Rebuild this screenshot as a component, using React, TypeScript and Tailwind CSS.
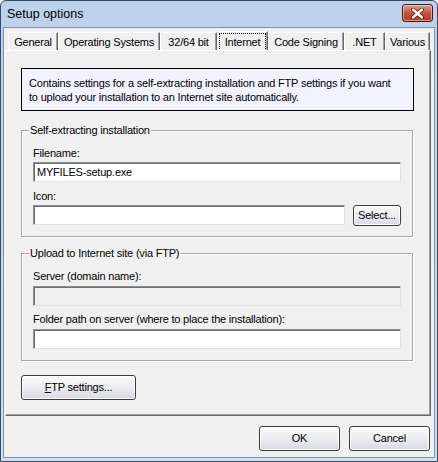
import React from 'react';

const tabs = [
  { label: 'General', w: 'w-[50px]' },
  { label: 'Operating Systems', w: 'w-[102px]' },
  { label: '32/64 bit', w: 'w-[57px]' },
  { label: 'Internet', w: 'w-[51px]', active: true },
  { label: 'Code Signing', w: 'w-[76px]' },
  { label: '.NET', w: 'w-[41px]' },
  { label: 'Various', w: 'w-[45px]' },
];

function TextBox({ value = '', disabled = false, className = '' }: { value?: string; disabled?: boolean; className?: string }) {
  return (
    <div
      className={`h-[20px] border border-t-[#8e8e8e] border-l-[#8e8e8e] border-r-[#e3e3e3] border-b-[#e3e3e3] shadow-[inset_1px_1px_0_#6d6d6d] pl-[3px] flex items-center ${disabled ? 'bg-[#f0f0f0]' : 'bg-white'} ${className}`}
    >
      {value}
    </div>
  );
}

function Button({ children, className = '' }: { children: React.ReactNode; className?: string }) {
  return (
    <div
      className={`flex items-center justify-center rounded-[3px] border border-[#3c3c3c] bg-gradient-to-b from-[#fbfbfd] via-[#ececf2] to-[#d9d9e6] shadow-[inset_0_0_0_1px_#fff] ${className}`}
    >
      {children}
    </div>
  );
}

function Group({ title, children, className = '' }: { title: string; children: React.ReactNode; className?: string }) {
  return (
    <fieldset
      className={`border border-[#a6a6a6] shadow-[inset_1px_1px_0_#fff,1px_1px_0_#fff] pl-[11px] pr-[11px] ${className}`}
    >
      <legend className="-ml-[4px] px-[1px] leading-[14px]">{title}</legend>
      {children}
    </fieldset>
  );
}

export default function App() {
  return (
    <div
      className="w-[438px] h-[462px] flex flex-col rounded-t-[6px] border border-[#3b4b63] bg-gradient-to-b from-[#bcd1ec] to-[#cfdff2] text-[11px] tracking-[-0.2px] text-black"
      style={{ fontFamily: '"Liberation Sans", Arial, sans-serif' }}
    >
      {/* title bar */}
      <div className="h-[26px] flex items-center pl-[6px] pr-[4px] shrink-0">
        <span className="text-[12.5px] tracking-normal flex-1 pt-[1px]">Setup options</span>
        <div className="w-[31px] h-[18px] -mt-[2px] rounded-[3px] border border-[#4a1a14] bg-gradient-to-b from-[#e2a08f] via-[#c5503b] to-[#b93a22] shadow-[inset_0_0_0_1px_rgba(255,255,255,0.45)] flex items-center justify-center">
          <svg width="13" height="11" viewBox="0 0 13 11">
            <path d="M2 1.5 L11 9.5 M11 1.5 L2 9.5" stroke="#5a1a10" strokeWidth="4" strokeLinecap="round" />
            <path d="M2 1.5 L11 9.5 M11 1.5 L2 9.5" stroke="#fff" strokeWidth="2.4" strokeLinecap="round" />
          </svg>
        </div>
      </div>

      {/* client area */}
      <div className="flex-1 mx-[2px] mb-[3px] border border-[#7f92ab] bg-[#f0f0f0] flex flex-col pt-[3px] pl-[1px] pr-[1px]">
        {/* tab strip */}
        <div className="flex items-end pl-[3px] h-[19px]">
          {tabs.map((t) => (
            <div
              key={t.label}
              className={`${t.w} ${t.active ? 'h-[20px] -mb-[1px]' : 'h-[18px]'} flex items-center justify-center border-t border-l border-white border-r border-r-[#696969] shadow-[inset_-1px_0_0_#a0a0a0] rounded-tl-[2px] px-[1px] pt-[1px]`}
            >
              {t.active ? (
                <span className="w-full h-full flex items-center justify-center border border-dotted border-black">
                  {t.label}
                </span>
              ) : (
                t.label
              )}
            </div>
          ))}
        </div>

        {/* tab panel */}
        <div className="h-[366px] mr-[2px] border border-t-white border-l-white border-r-[#696969] border-b-[#696969] shadow-[inset_-1px_-1px_0_#a0a0a0] pl-[15px] pr-[16px] pt-[17px] flex flex-col">
          <div className="h-[43px] border border-black bg-[#f3f3ff] px-[7px] pt-[7px] leading-[14px]">
            Contains settings for a self-extracting installation and FTP settings if you want
            <br />
            to upload your installation to an Internet site automatically.
          </div>

          <Group title="Self-extracting installation" className="mt-[12px] pb-[10px] mr-[1px]">
            <div className="pt-[9px] leading-[14px]">Filename:</div>
            <TextBox value="MYFILES-setup.exe" className="mt-[2px]" />
            <div className="mt-[7px] leading-[14px]">Icon:</div>
            <div className="mt-[2px] flex items-start gap-[8px]">
              <TextBox className="flex-1" />
              <Button className="w-[48px] h-[21px]">Select...</Button>
            </div>
          </Group>

          <Group title="Upload to Internet site (via FTP)" className="mt-[9px] pb-[11px] mr-[1px]">
            <div className="pt-[9px] leading-[14px]">Server (domain name):</div>
            <TextBox disabled className="mt-[3px]" />
            <div className="mt-[6px] leading-[14px]">Folder path on server (where to place the installation):</div>
            <TextBox className="mt-[3px]" />
          </Group>

          <Button className="mt-[14px] w-[115px] h-[25px]">
            <span>
              <span className="underline">F</span>TP settings...
            </span>
          </Button>
        </div>

        {/* dialog buttons */}
        <div className="flex justify-end gap-[9px] pr-[3px] mt-[10px]">
          <Button className="w-[81px] h-[25px]">OK</Button>
          <Button className="w-[81px] h-[25px]">Cancel</Button>
        </div>
      </div>
    </div>
  );
}
